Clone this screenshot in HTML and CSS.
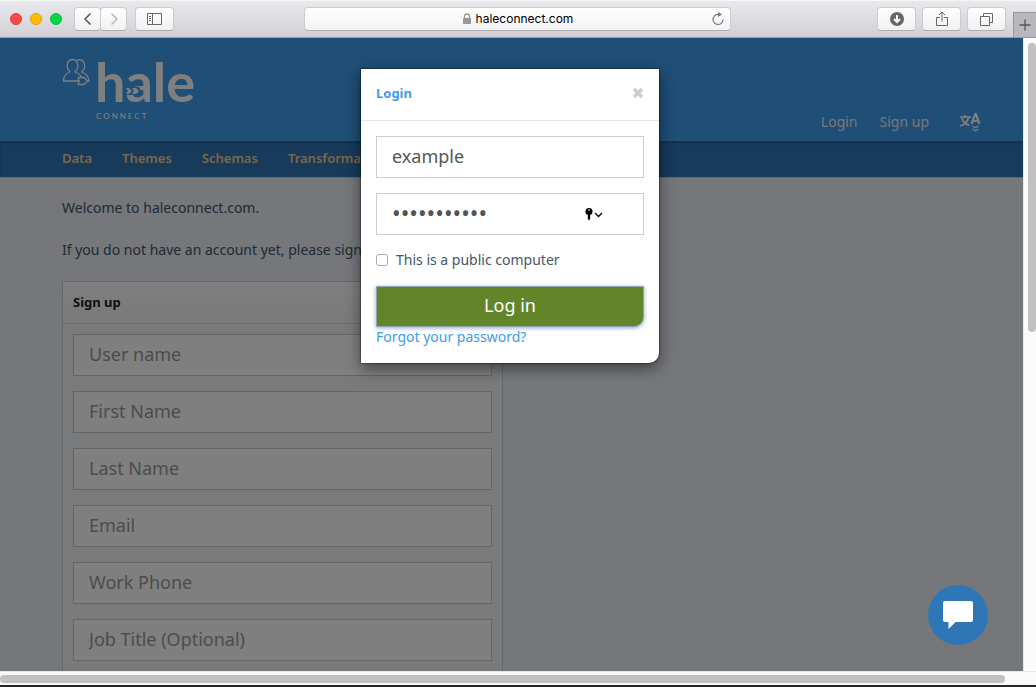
FILE: index.html
```html
<!DOCTYPE html>
<html lang="en">
<head>
<meta charset="utf-8">
<title>haleconnect.com</title>
<link rel="stylesheet" href="styles.css">
</head>
<body>
<div class="toolbar">
  <div class="lights"><span class="light red"></span><span class="light yellow"></span><span class="light green"></span></div>
  <div class="history">
    <button class="tool half" aria-label="Back"><svg width="10" height="14" viewBox="0 0 10 14"><path d="M7.500 1.500 2 7l5.500 5.500" fill="none" stroke="#555" stroke-width="1.500"/></svg></button>
    <button class="tool half" aria-label="Forward"><svg width="10" height="14" viewBox="0 0 10 14"><path d="M2.500 1.500 8 7l-5.500 5.500" fill="none" stroke="#bbb" stroke-width="1.500"/></svg></button>
  </div>
  <button class="tool" aria-label="Sidebar"><svg width="16" height="13" viewBox="0 0 16 13" fill="none" stroke="#666"><path d="M.5.5h14v11H.5zM5.500.5v11M2 3.500h2M2 5.500h2M2 7.500h2"/></svg></button>
  <div class="address">
    <svg width="10" height="12" viewBox="0 0 10 12"><path d="M2.500 6V3.500a2.500 2.500 0 0 1 5 0V6" fill="none" stroke="#999" stroke-width="1.300"/><rect x="1" y="5" width="8" height="6" rx=".5" fill="#999"/></svg>
    <span>haleconnect.com</span>
    <button class="reload" aria-label="Reload"><svg width="14" height="14" viewBox="0 0 14 14"><path d="M7.500 2.500A5 5 0 1 0 12 7.500" fill="none" stroke="#777" stroke-width="1.200"/><path d="M7 0v5l4-2.500z" fill="#777"/></svg></button>
  </div>
  <div class="tools">
    <button class="tool" aria-label="Downloads"><svg width="14" height="14" viewBox="0 0 14 14"><circle cx="7" cy="7" r="7" fill="#666"/><path d="M7 3v7M4 7l3 3 3-3" fill="none" stroke="#fff" stroke-width="2"/></svg></button>
    <button class="tool" aria-label="Share"><svg width="12" height="16" viewBox="0 0 12 16" fill="none" stroke="#666"><path d="M4 6.500H.5v8h11v-8H8M6 10.500V1M3 4l3-3 3 3"/></svg></button>
    <button class="tool" aria-label="Show tabs"><svg width="13" height="13" viewBox="0 0 13 13" fill="none" stroke="#666"><path d="M.5 3.500h9v9h-9zM3.500 3.500v-3h9v9h-3"/></svg></button>
  </div>
  <button class="newtab" aria-label="New tab"><svg width="12" height="12" viewBox="0 0 12 12"><path d="M6 .5v11M.5 6h11" stroke="#555" stroke-width="1.300"/></svg></button>
</div>
<div class="window">
  <div class="viewport">
    <header class="header">
      <div class="brand">
        <svg class="people" width="29" height="28" viewBox="0 0 29 28" fill="none" stroke="#fff" stroke-width="1.300" stroke-linejoin="round"><path d="M16.500 23H1.500c0-5 2-7.500 6.500-9C4 10.500 4 1.500 10.500 1.500S17 10.500 13 14c3.500 1 5.500 3 6.500 5.500"/><path d="M15 2.300c6.500-3 11 6 4.500 11.700 5 1.500 7 4.500 7.500 9h-1.500M16.500 19.500h5.500l3.500 3.500-3.500 3.500h-5.500v-2.500l1-1-1-1z"/></svg>
        <div class="wordmark">
          <span class="hale">hale</span>
          <span class="connect">CONNECT</span>
          <svg class="arrow" width="15" height="8" viewBox="0 0 15 8"><path d="M0 0h13l2 4-2 4H0l2-4z" fill="#3e9cec"/><path d="M0 1h3l3 3-3 3H0l2-3zM6 1h4l3 3-3 3H6l2-3z" fill="#fff"/></svg>
        </div>
      </div>
      <nav class="account">
        <a href="#login">Login</a>
        <a href="#signup">Sign up</a>
        <a class="lang" href="#language" aria-label="Language"><svg width="22" height="20" viewBox="0 0 22 20" fill="none" stroke="#fff" stroke-width="1.700"><path d="M1 5h11M6 3v3M3 6c1 4 4 6.500 7.500 7.500M9.500 5.500C8.500 10 5 13 1 14"/><path d="M12.500 12l3.700-10h.6l3.700 10M14 9h5" stroke-width="2.200"/><path d="M13.500 14l3 1.700 3-1.700M13.500 17l3 1.700 3-1.700" stroke-width="1.300"/></svg></a>
      </nav>
    </header>
    <nav class="nav">
      <a href="#data">Data</a><a href="#themes">Themes</a><a href="#schemas">Schemas</a><a href="#transformations">Transformations</a>
    </nav>
    <main class="content">
      <p>Welcome to haleconnect.com.</p>
      <p>If you do not have an account yet, please sign up.</p>
      <section class="panel">
        <h2>Sign up</h2>
        <form class="fields">
          <input class="field" type="text" placeholder="User name" aria-label="User name">
          <input class="field" type="text" placeholder="First Name" aria-label="First Name">
          <input class="field" type="text" placeholder="Last Name" aria-label="Last Name">
          <input class="field" type="email" placeholder="Email" aria-label="Email">
          <input class="field" type="tel" placeholder="Work Phone" aria-label="Work Phone">
          <input class="field" type="text" placeholder="Job Title (Optional)" aria-label="Job Title (Optional)">
        </form>
      </section>
    </main>
    <div class="backdrop">
      <div class="modal" role="dialog" aria-labelledby="login-title">
        <div class="modal-head">
          <h1 id="login-title">Login</h1>
          <button class="close" aria-label="Close"><svg width="12" height="12" viewBox="0 0 12 12"><path d="M2 2l8 8M10 2l-8 8" stroke="#ccc" stroke-width="3.400"/></svg></button>
        </div>
        <form class="modal-body">
          <input class="field" type="text" value="example" aria-label="User name">
          <div class="password">
            <input class="field secret" type="password" value="elevenchars" aria-label="Password">
            <svg class="key" width="18" height="13" viewBox="0 0 18 13"><circle cx="4" cy="3.500" r="3.500"/><path d="M2.800 5h2.400v5.500L4 12.500l-1.200-1.500z"/><circle cx="4" cy="2" r=".8" fill="#fff"/><path d="M10 5l3.500 3.500L17 5" fill="none" stroke="#000" stroke-width="1.300"/></svg>
          </div>
          <label class="public"><input type="checkbox">This is a public computer</label>
          <button class="submit" type="submit">Log in</button>
          <a class="forgot" href="#forgot">Forgot your password?</a>
        </form>
      </div>
    </div>
    <button class="chat" aria-label="Chat"><svg width="30" height="28" viewBox="0 0 30 28"><path d="M2 0h26q2 0 2 2v17q0 2-2 2H12.500L5.500 28v-7H2q-2 0-2-2V2q0-2 2-2z" fill="#fff"/></svg></button>
  </div>
  <div class="vscroll"><div class="vthumb"></div></div>
</div>
<div class="hscroll"><div class="hthumb"></div></div>
<div class="desktop"></div>
</body>
</html>
```
FILE: styles.css
```css
* { box-sizing: border-box; }
body { margin: 0; height: 100vh; display: flex; flex-direction: column; overflow: hidden; font: 14px/20px "Noto Sans", sans-serif; color: #445668; }
button { padding: 0; border: 0; background: none; font: inherit; }
a { text-decoration: none; color: inherit; }
svg { display: block; }

.toolbar { flex: none; height: 38px; display: flex; align-items: center; padding-left: 10px; background: linear-gradient(#e9e9ed, #d0d0d5); border-top: 1px solid #f6f6f6; border-bottom: 1px solid #989ba4; }
.lights { display: flex; gap: 8px; margin-right: 12px; }
.light { width: 12px; height: 12px; border-radius: 50%; border: 1px solid; }
.red { background: #ff4848; border-color: #e2383b; }
.yellow { background: #ffbd00; border-color: #e0a106; }
.green { background: #00d742; border-color: #0fbd3c; }
.history { display: flex; margin-right: 8px; }
.tool { width: 39px; height: 24px; display: flex; align-items: center; justify-content: center; background: linear-gradient(#fff, #f1f1f2); border: 1px solid #cbccd1; border-bottom-color: #adaeb3; border-radius: 4px; }
.half { width: 27px; }
.half + .half { margin-left: -1px; }
.address { flex: 1; height: 24px; margin: 0 146px 0 130px; display: flex; align-items: center; justify-content: center; position: relative; background: linear-gradient(#fff, #f3f3f4); border: 1px solid #cbccd1; border-bottom-color: #adaeb3; border-radius: 4px; gap: 4px; font: 12px/18px Inter, sans-serif; color: #000; }
.reload { position: absolute; right: 5px; top: 4px; }
.tools { display: flex; gap: 6px; margin-right: 7px; }
.newtab { width: 23px; height: 25px; align-self: flex-end; display: flex; align-items: center; justify-content: center; background: #b7b8bd; border-left: 1px solid #96979b; border-top: 1px solid #96979b; }

.window { flex: 1; min-height: 0; display: flex; }
.viewport { flex: 1; min-width: 0; overflow: hidden; position: relative; background: #eaeef4; }
.header { height: 103px; padding: 0 42px 0 62px; display: flex; justify-content: space-between; background: #3e9cec; color: #fff; }
.brand { display: flex; padding-top: 20px; gap: 4px; }
.wordmark { position: relative; display: flex; flex-direction: column; }
.hale { font: 700 54px/48px Lato, sans-serif; }
.connect { font: 8px/12px Lato, sans-serif; letter-spacing: 2px; padding: 4px 0 0 1px; }
.arrow { position: absolute; left: 31px; top: 29px; }
.account { display: flex; align-items: center; gap: 22px; padding-top: 64px; color: #eee; }
.lang { padding-left: 8px; }
.nav { height: 37px; padding: 0 62px 2px; display: flex; align-items: center; gap: 30px; background: #3074b6; border-bottom: 1px solid #cfcfcf; box-shadow: inset 0 2px 2px #285f97; color: #f2cf8b; font-weight: 600; font-size: 13px; }
.content { padding: 20px 42px 0 62px; }
.content p { margin: 0 0 22px; }
.content p + p { margin-bottom: 21px; }
.panel { width: 48%; border: 1px solid #cdd1d8; background: #f2f5f9; }
.panel h2 { margin: 0; height: 42px; padding: 0 10px; font: 700 13px/40px "Noto Sans", sans-serif; color: #222; background: linear-gradient(#fff, #f3f3f3); border-bottom: 1px solid #dde; }
.fields { padding: 10px; display: flex; flex-direction: column; gap: 15px; }
.field { display: block; width: 100%; height: 42px; padding: 0 15px 2px; border: 1px solid #ccc; border-radius: 0; background: #fff; color: #555; font: 18px/24px "Noto Sans", sans-serif; }
.secret { font-size: 23px; }
.field::placeholder { color: #999; opacity: 1; }

.backdrop { position: absolute; inset: 0; display: flex; justify-content: center; align-items: flex-start; padding: 31px 3px 0 0; background: rgba(0, 0, 0, .5); }
.modal { width: 298px; background: #fff; border-radius: 0 0 10px 0; box-shadow: 0 5px 15px rgba(0, 0, 0, .5), 0 0 1px 1px rgba(0, 0, 0, .3); }
.modal-head { height: 52px; padding: 0 15px 3px; display: flex; align-items: center; justify-content: space-between; border-bottom: 1px solid #e5e5e5; }
.modal-head h1 { margin: 0; font: 700 13px/20px "Noto Sans", sans-serif; color: #3e9cec; }
.modal-body { padding: 15px 15px 16px; display: flex; flex-direction: column; }
.password { position: relative; margin-top: 15px; }
.key { position: absolute; right: 41px; top: 15px; }
.public { display: flex; align-items: center; gap: 8px; margin: 15px 0 16px; }
.public input { appearance: none; width: 12px; height: 12px; margin: 0; border: 1px solid #aaa; border-radius: 3px; background: #fff; }
.submit { height: 41px; padding-bottom: 3px; background: #63852a; border: 1px solid #8fa4b4; border-radius: 0 0 10px 0; box-shadow: 0 1px 4px #8aa6cc; color: #fff; font-size: 18px; line-height: 24px; }
.forgot { color: #3e9cec; align-self: flex-start; }
.chat { position: absolute; right: 35px; bottom: 26px; width: 60px; height: 60px; border-radius: 50%; display: flex; align-items: center; justify-content: center; background: #2f76b6; }

.vscroll { width: 13px; padding: 5px 0 0 4px; background: #fafafa; border-left: 1px solid #e8e8e8; }
.vthumb { width: 8px; height: 46%; border-radius: 4px; background: #c1c1c1; }
.hscroll { flex: none; height: 14px; padding-top: 3px; background: #fafafa; border-top: 1px solid #e8e8e8; }
.hthumb { width: 97%; height: 8px; border-radius: 4px; background: #c1c1c1; }
.desktop { flex: none; height: 2px; background: #252720; }
```
